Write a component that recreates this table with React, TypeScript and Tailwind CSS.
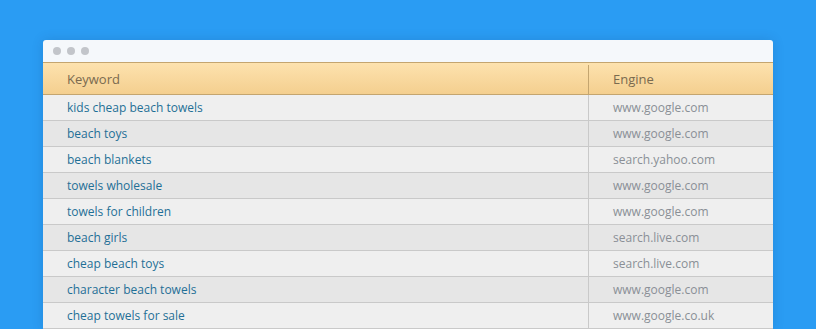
const rows = [
  ['kids cheap beach towels', 'www.google.com'],
  ['beach toys', 'www.google.com'],
  ['beach blankets', 'search.yahoo.com'],
  ['towels wholesale', 'www.google.com'],
  ['towels for children', 'www.google.com'],
  ['beach girls', 'search.live.com'],
  ['cheap beach toys', 'search.live.com'],
  ['character beach towels', 'www.google.com'],
  ['cheap towels for sale', 'www.google.co.uk'],
]

export default function App() {
  return (
    <div className="h-[329px] w-[816px] overflow-hidden bg-[#2a9cf3] pt-10 pl-[43px] font-['Open_Sans',sans-serif]">
      <div className="w-[730px] overflow-hidden rounded-t-[3px] bg-[#f5f8fb] shadow-[0_0_12px_rgba(0,40,90,0.15)]">
        <div className="flex h-[22px] items-center gap-[6px] pl-[10px]">
          <span className="h-2 w-2 rounded-full bg-[#c2c5ca]" />
          <span className="h-2 w-2 rounded-full bg-[#c2c5ca]" />
          <span className="h-2 w-2 rounded-full bg-[#c2c5ca]" />
        </div>
        <div className="flex h-[33px] border-y border-[#c4a56f] bg-gradient-to-b from-[#fde2ae] to-[#f4cf8f] pt-[2px] text-[13px] text-[#7a6a4f]">
          <div className="flex w-[546px] items-center border-r border-[#c4a56f] pl-6">Keyword</div>
          <div className="flex flex-1 items-center pl-6">Engine</div>
        </div>
        {rows.map(([kw, engine], i) => (
          <div
            key={kw}
            className={`flex h-[26px] border-b border-[#c9c9c9] text-[12px] ${i % 2 === 0 ? 'bg-[#efefef]' : 'bg-[#e6e6e6]'}`}
          >
            <div className="flex w-[546px] items-center border-r border-[#c9c9c9] pl-6 text-[#1f6f96]">{kw}</div>
            <div className="flex flex-1 items-center pl-6 text-[#8a8f96]">{engine}</div>
          </div>
        ))}
      </div>
    </div>
  )
}
